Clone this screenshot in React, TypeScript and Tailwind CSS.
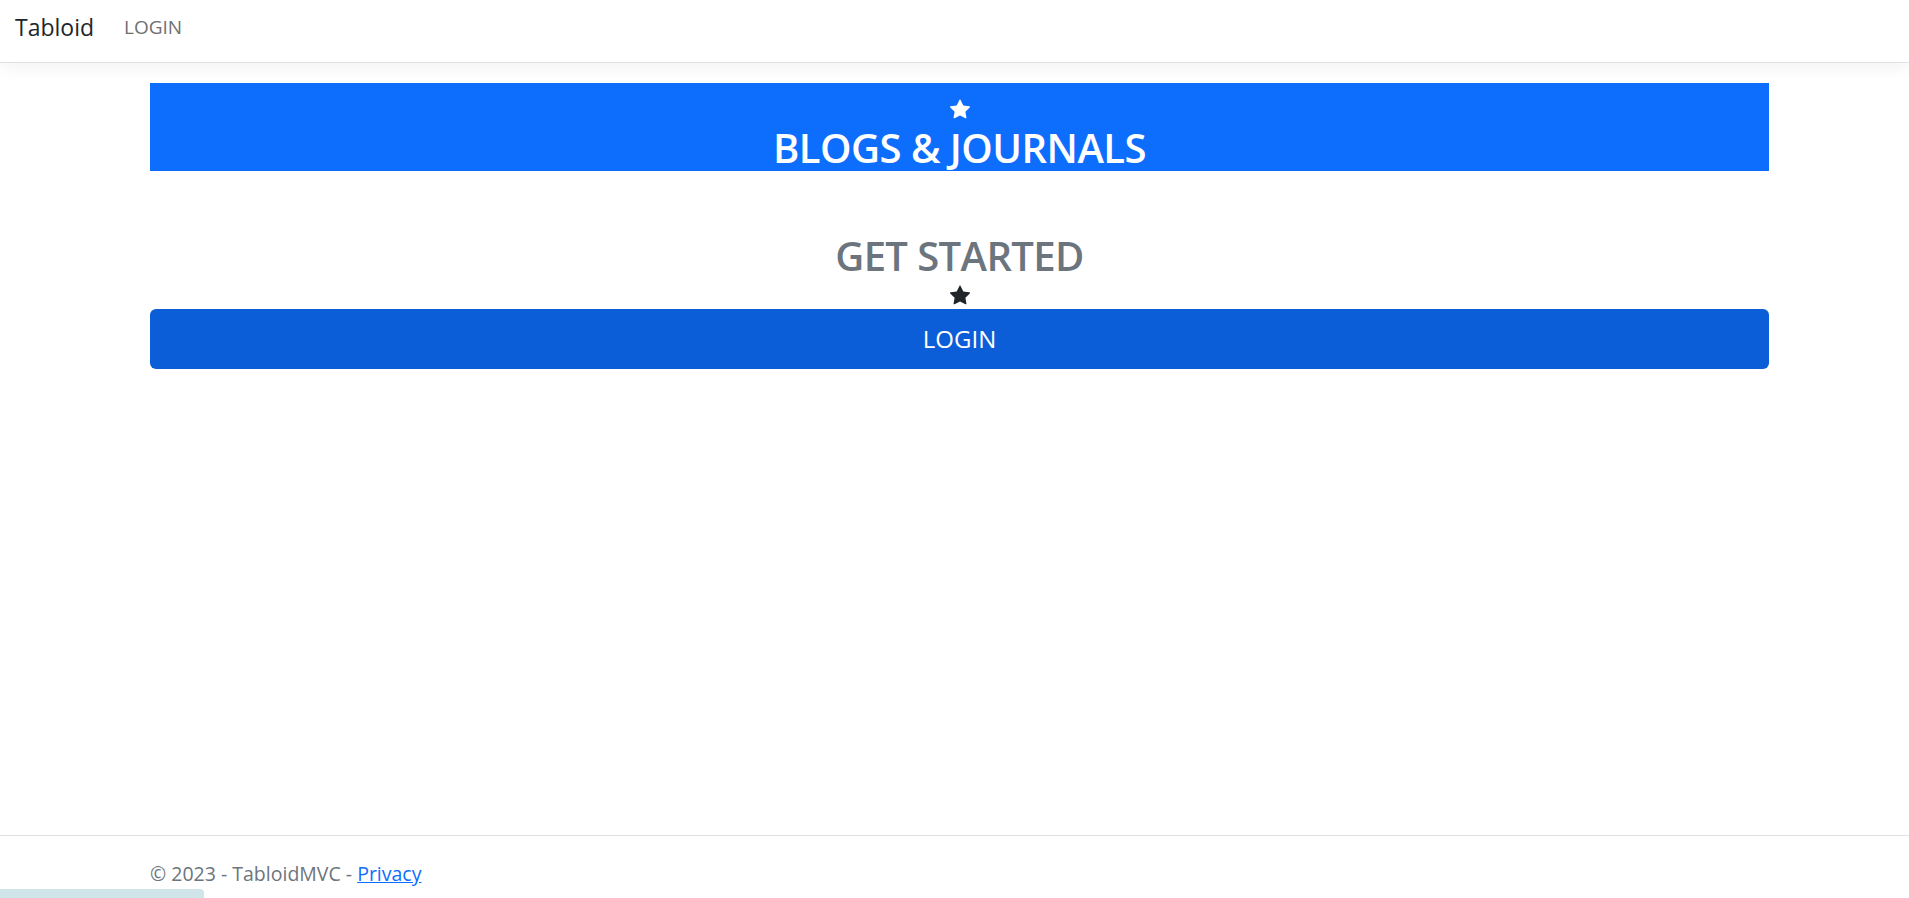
const font = { fontFamily: '"Open Sans", "Noto Sans", Arial, sans-serif' };

const StarFill = ({ className }: { className?: string }) => (
  <svg viewBox="0 0 16 16" fill="currentColor" className={className}>
    <path d="M3.612 15.443c-.386.198-.824-.149-.746-.592l.83-4.73L.173 6.765c-.329-.314-.158-.888.283-.95l4.898-.696L7.538.792c.197-.39.73-.39.927 0l2.184 4.327 4.898.696c.441.062.612.636.282.95l-3.522 3.356.83 4.73c.078.443-.36.79-.746.592L8 13.187l-4.389 2.256z" />
  </svg>
);

const Navbar = () => (
  <header className="h-[63px] bg-white border-b border-[#dee2e6] shadow-[0_5px_15px_rgba(0,0,0,0.05)] flex items-center px-[15px] pb-[7px]">
    <a className="text-[23px] text-[#212529] leading-none mr-[30px]">Tabloid</a>
    <a className="text-[19px] text-[#6f6f6f] leading-none">LOGIN</a>
  </header>
);

export default function App() {
  return (
    <div className="h-[898px] overflow-hidden bg-white relative" style={font}>
      <Navbar />

      <main className="ml-[150px] w-[1619px] mt-[20px]">
        <div className="bg-[#0d6efd] text-white flex flex-col items-center pt-[16px]">
          <StarFill className="w-[20px] h-[20px]" />
          <h2 className="mt-[5px] text-[40px] leading-[47px] font-semibold tracking-[-0.5px]">
            BLOGS &amp; JOURNALS
          </h2>
        </div>

        <div className="flex flex-col items-center mt-[61px]">
          <h2 className="text-[40px] leading-[48px] font-semibold text-[#6c757d] tracking-[-0.6px]">
            GET STARTED
          </h2>
          <StarFill className="w-[20px] h-[20px] mt-[5px] text-[#212529]" />
        </div>

        <button className="mt-[4px] w-full h-[60px] rounded-[6px] bg-[#0b5ed7] text-white text-[24px] leading-none">
          LOGIN
        </button>
      </main>

      <footer className="absolute left-0 right-0 top-[835px] h-[75px] border-t border-[#dee2e6] text-[#6c757d] text-[19.5px] leading-[75px] px-[150px]">
        © 2023 - TabloidMVC -{" "}
        <a className="text-[#0d6efd] underline">Privacy</a>
      </footer>

      <div className="absolute left-0 top-[889px] w-[204px] h-[20px] bg-[#cfe5ea] rounded-tr-[4px] text-[12px] leading-[20px] text-[#333] px-[6px] pt-[8px] overflow-hidden whitespace-nowrap">
        https://localhost:7131/account/login
      </div>
    </div>
  );
}
